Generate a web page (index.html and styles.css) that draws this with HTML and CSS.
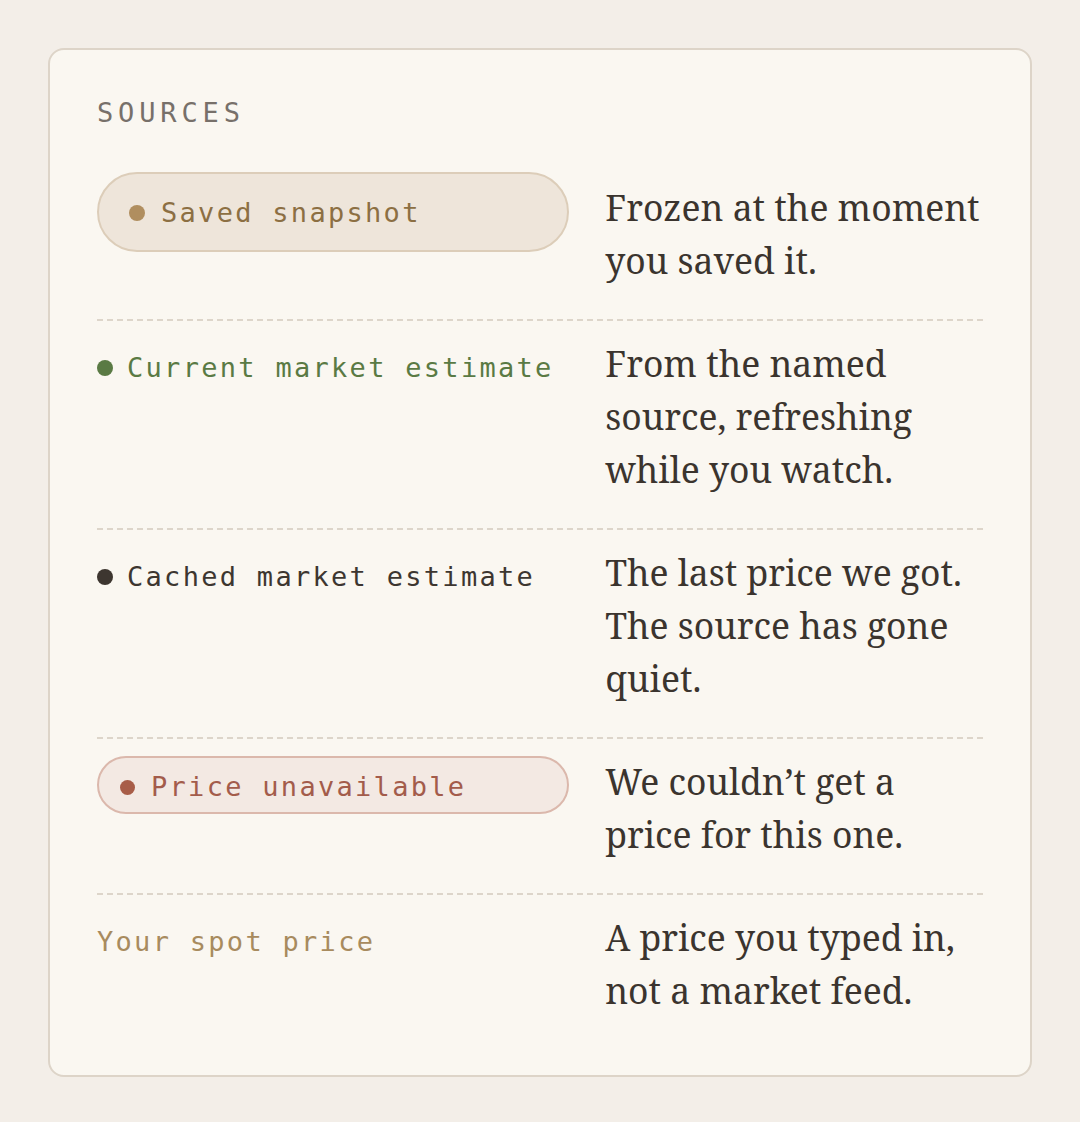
FILE: index.html
```html
<!DOCTYPE html>
<html lang="en">
<head>
    <meta charset="UTF-8">
    <meta name="viewport" content="width=device-width, initial-scale=1.0">
    <title>Sources</title>
    <link rel="stylesheet" href="styles.css">
</head>
<body>
    <div class="card">
        <h2 class="card-title">Sources</h2>

        <div class="source-row">
            <div class="source-label">
                <span class="pill pill-saved"><span class="dot"></span>Saved snapshot</span>
            </div>
            <p class="source-desc">Frozen at the moment you saved it.</p>
        </div>

        <div class="source-row">
            <div class="source-label label-current"><span class="dot"></span>Current market estimate</div>
            <p class="source-desc">From the named source, refreshing while you watch.</p>
        </div>

        <div class="source-row">
            <div class="source-label label-cached"><span class="dot"></span>Cached market estimate</div>
            <p class="source-desc">The last price we got. The source has gone quiet.</p>
        </div>

        <div class="source-row">
            <div class="source-label">
                <span class="pill pill-missing"><span class="dot"></span>Price unavailable</span>
            </div>
            <p class="source-desc">We couldn&rsquo;t get a price for this one.</p>
        </div>

        <div class="source-row">
            <div class="source-label label-spot">Your spot price</div>
            <p class="source-desc">A price you typed in, not a market feed.</p>
        </div>
    </div>
</body>
</html>
```

FILE: styles.css
```css
body {
    margin: 0;
    padding: 48px;
    background-color: #f3eee8;
    color: #3b342e;
    font-family: "Noto Serif", "DejaVu Serif", serif;
}

.card {
    background-color: #faf7f1;
    border: 2px solid #ddd4c8;
    border-radius: 16px;
    padding: 44px 47px 26px;
}

.card-title {
    margin: 0 0 40px;
    font-family: "DejaVu Sans Mono", monospace;
    font-size: 27px;
    font-weight: normal;
    line-height: 1.4;
    letter-spacing: 0.18em;
    text-transform: uppercase;
    color: #77706a;
}

.source-row {
    display: grid;
    grid-template-columns: 5fr 4fr;
    column-gap: 36px;
    align-items: baseline;
    padding: 16px 0 32px;
    border-top: 2px dashed #ddd5ca;
}

.card-title + .source-row {
    border-top: none;
    padding-top: 0;
}

.source-label {
    display: flex;
    align-items: baseline;
    gap: 14px;
    font-family: "DejaVu Sans Mono", monospace;
    font-size: 27px;
    letter-spacing: 0.085em;
    line-height: 1.4;
}

.dot {
    flex: none;
    width: 16px;
    height: 16px;
    border-radius: 50%;
    background-color: currentColor;
    align-self: center;
}

.pill {
    display: flex;
    align-items: center;
    gap: 16px;
    width: 100%;
    box-sizing: border-box;
    border-radius: 999px;
    border: 2px solid;
}

.pill-saved {
    padding: 20px 31px 18px 30px;
    background-color: #eee5da;
    border-color: #dccdb9;
    color: #8c6f43;
}
.pill-saved .dot { background-color: #b08e5f; }

.pill-missing {
    padding: 10px 21px 6px;
    background-color: #f3e9e3;
    border-color: #dbb8ac;
    color: #a35c4b;
}
.pill-missing .dot { background-color: #a85d48; width: 15px; height: 15px; }

.label-current { color: #5a7a44; }
.label-cached { color: #3d3630; }
.label-spot { color: #a88b5e; }

.source-desc {
    margin: 0;
    font-size: 35.5px;
    line-height: 53px;
    color: #3b342e;
}
```
